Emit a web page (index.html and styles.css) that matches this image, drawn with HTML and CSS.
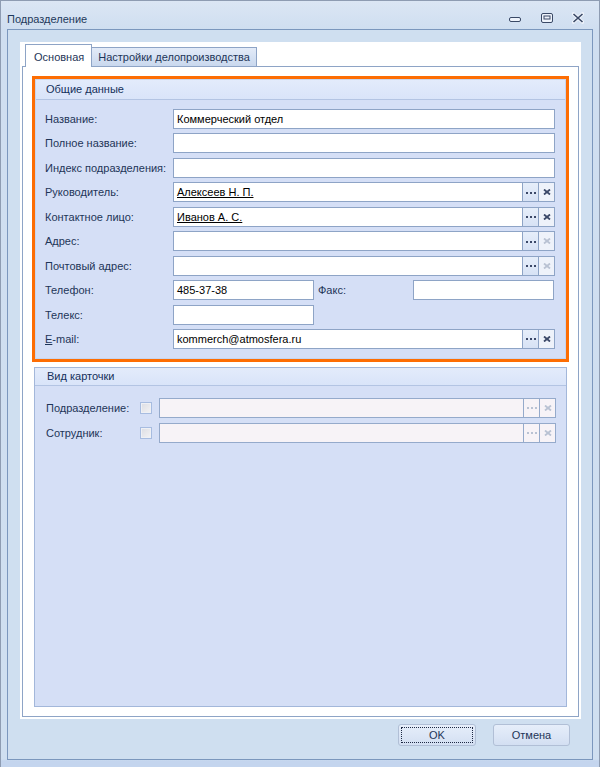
FILE: index.html
```html
<!DOCTYPE html>
<html lang="ru">
<head>
<meta charset="utf-8">
<title>Подразделение</title>
<link rel="stylesheet" href="styles.css">
</head>
<body>
<div class="window">
  <div class="titlebar">
    <span class="title">Подразделение</span>
    <div class="wbtns">
      <svg class="wbtn" width="12" height="12" viewBox="0 0 12 12"><rect x="0.5" y="5.5" width="11" height="4" rx="1.5" fill="#eef3fb" stroke="#3a4966"/></svg>
      <svg class="wbtn" width="12" height="12" viewBox="0 0 12 12"><rect x="0.5" y="1.5" width="11" height="9" rx="1.5" fill="#eef3fb" stroke="#3a4966"/><rect x="3" y="4" width="6" height="3" fill="none" stroke="#3a4966"/></svg>
      <svg class="wbtn" width="12" height="12" viewBox="0 0 12 12"><path d="M1.5 2 L10.5 10 M10.5 2 L1.5 10" stroke="#eef3fb" stroke-width="3.6" stroke-linecap="round"/><path d="M1.5 2 L10.5 10 M10.5 2 L1.5 10" stroke="#3a4966" stroke-width="1.6"/></svg>
    </div>
  </div>
  <div class="frame">
    <div class="panel">
      <div class="tabs">
        <div class="tab active">Основная</div>
        <div class="tab">Настройки делопроизводства</div>
      </div>
      <div class="pane">
        <div class="focusbox">
          <div class="group g1">
            <div class="ghead">Общие данные</div>
            <div class="gbody form">
              <label>Название:</label>
              <div class="field"><span class="val">Коммерческий отдел</span></div>
              <label>Полное название:</label>
              <div class="field"></div>
              <label>Индекс подразделения:</label>
              <div class="field"></div>
              <label>Руководитель:</label>
              <div class="field lookup"><span class="val link">Алексеев Н. П.</span><span class="fb dots"><svg width="10" height="3" viewBox="0 0 10 3"><rect x="0" y="0" width="2" height="2"/><rect x="4" y="0" width="2" height="2"/><rect x="8" y="0" width="2" height="2"/></svg></span><span class="fb clr"><svg width="8" height="6" viewBox="0 0 8 6"><path d="M1 0.5 L7 5.5 M7 0.5 L1 5.5" stroke-width="1.8"/></svg></span></div>
              <label>Контактное лицо:</label>
              <div class="field lookup"><span class="val link">Иванов А. С.</span><span class="fb dots"><svg width="10" height="3" viewBox="0 0 10 3"><rect x="0" y="0" width="2" height="2"/><rect x="4" y="0" width="2" height="2"/><rect x="8" y="0" width="2" height="2"/></svg></span><span class="fb clr"><svg width="8" height="6" viewBox="0 0 8 6"><path d="M1 0.5 L7 5.5 M7 0.5 L1 5.5" stroke-width="1.8"/></svg></span></div>
              <label>Адрес:</label>
              <div class="field lookup"><span class="val"></span><span class="fb dots"><svg width="10" height="3" viewBox="0 0 10 3"><rect x="0" y="0" width="2" height="2"/><rect x="4" y="0" width="2" height="2"/><rect x="8" y="0" width="2" height="2"/></svg></span><span class="fb clr off"><svg width="8" height="6" viewBox="0 0 8 6"><path d="M1 0.5 L7 5.5 M7 0.5 L1 5.5" stroke-width="1.8"/></svg></span></div>
              <label>Почтовый адрес:</label>
              <div class="field lookup"><span class="val"></span><span class="fb dots"><svg width="10" height="3" viewBox="0 0 10 3"><rect x="0" y="0" width="2" height="2"/><rect x="4" y="0" width="2" height="2"/><rect x="8" y="0" width="2" height="2"/></svg></span><span class="fb clr off"><svg width="8" height="6" viewBox="0 0 8 6"><path d="M1 0.5 L7 5.5 M7 0.5 L1 5.5" stroke-width="1.8"/></svg></span></div>
              <label>Телефон:</label>
              <div class="split">
                <div class="field short"><span class="val">485-37-38</span></div>
                <label class="fax">Факс:</label>
                <div class="field short"></div>
              </div>
              <label>Телекс:</label>
              <div class="split">
                <div class="field short"></div>
              </div>
              <label><u>E</u>-mail:</label>
              <div class="field lookup"><span class="val">kommerch@atmosfera.ru</span><span class="fb dots"><svg width="10" height="3" viewBox="0 0 10 3"><rect x="0" y="0" width="2" height="2"/><rect x="4" y="0" width="2" height="2"/><rect x="8" y="0" width="2" height="2"/></svg></span><span class="fb clr"><svg width="8" height="6" viewBox="0 0 8 6"><path d="M1 0.5 L7 5.5 M7 0.5 L1 5.5" stroke-width="1.8"/></svg></span></div>
            </div>
          </div>
        </div>
        <div class="group g2">
          <div class="ghead">Вид карточки</div>
          <div class="gbody form2">
            <label>Подразделение:</label>
            <span class="chk"></span>
            <div class="field lookup disabled"><span class="val"></span><span class="fb dots off"><svg width="10" height="3" viewBox="0 0 10 3"><rect x="0" y="0" width="2" height="2"/><rect x="4" y="0" width="2" height="2"/><rect x="8" y="0" width="2" height="2"/></svg></span><span class="fb clr off"><svg width="8" height="6" viewBox="0 0 8 6"><path d="M1 0.5 L7 5.5 M7 0.5 L1 5.5" stroke-width="1.8"/></svg></span></div>
            <label>Сотрудник:</label>
            <span class="chk"></span>
            <div class="field lookup disabled"><span class="val"></span><span class="fb dots off"><svg width="10" height="3" viewBox="0 0 10 3"><rect x="0" y="0" width="2" height="2"/><rect x="4" y="0" width="2" height="2"/><rect x="8" y="0" width="2" height="2"/></svg></span><span class="fb clr off"><svg width="8" height="6" viewBox="0 0 8 6"><path d="M1 0.5 L7 5.5 M7 0.5 L1 5.5" stroke-width="1.8"/></svg></span></div>
          </div>
        </div>
      </div>
    </div>
    <div class="actions">
      <button class="btn ok focused"><span>OK</span></button>
      <button class="btn"><span>Отмена</span></button>
    </div>
  </div>
</div>
</body>
</html>
```
FILE: styles.css
```css
* { box-sizing: border-box; }
html, body { margin: 0; padding: 0; }
body {
  width: 600px;
  height: 767px;
  overflow: hidden;
  font-family: "Liberation Sans", Arial, sans-serif;
  font-size: 11px;
  color: #1e3558;
  background: #c8d8ee;
}
.window {
  width: 600px;
  height: 767px;
  border: 1px solid #8e9cb2;
  border-bottom: none;
  background: linear-gradient(#dbe6f4, #cfdef0 29px, #cfdff0 758px, #c4d5ee 760px);
  display: flex;
  flex-direction: column;
}
.titlebar {
  height: 28px;
  display: flex;
  align-items: center;
  padding-left: 6px;
  padding-right: 14px;
  flex: none;
}
.title { color: #1e395b; font-size: 11px; margin-top: 8px; }
.wbtns { margin-left: auto; display: flex; gap: 19px; margin-top: 6px; margin-right: 1px; }
.wbtns .wbtn:first-child { margin-right: 1px; }
.wbtn { display: block; }
.frame {
  margin: 0 6px;
  border: 1px solid #7b97bd;
  height: 731px;
  display: flex;
  flex-direction: column;
  padding: 12px 11px 0 12px;
  background: #cfdff0;
  flex: none;
}
.panel {
  background: #fff;
  height: 677px;
  padding: 2px 2px 2px 2px;
  display: flex;
  flex-direction: column;
  flex: none;
}
.tabs {
  display: flex;
  align-items: flex-end;
  padding-left: 3px;
  height: 22px;
  flex: none;
  position: relative;
  z-index: 1;
}
.tab {
  height: 19px;
  padding: 0 6px 0 6px;
  line-height: 18px;
  border: 1px solid #8ea4c6;
  border-bottom: none;
  background: linear-gradient(#e3ebf8, #c9d8ee);
  color: #1e3558;
  margin-left: -1px;
}
.tab.active {
  height: 23px;
  margin-bottom: -1px;
  background: #fff;
  padding: 3px 7px 0 8px;
  margin-left: 0;
  border-right: 1px solid #8ea4c6;
  color: #1e3558;
}
.pane {
  flex: 1;
  border: 1px solid #8ea4c6;
  padding: 9px;
  background: #fff;
  display: flex;
  flex-direction: column;
  gap: 5px;
}
.focusbox {
  border: 3px solid #fd6d03;
  flex: none;
}
.group {
  background: #d5dff6;
  border: 1px solid #a3b7da;
}
.g1 { border-color: #c7d5ee; }
.g2 { flex: 1; margin: 0 2px; }
.ghead {
  height: 20px;
  line-height: 19px;
  padding-left: 10px;
  background: linear-gradient(#e3ebfb, #d9e4f9);
  border-bottom: 1px solid #b3c4e3;
  color: #15305a;
}
.g2 .ghead { height: 18px; line-height: 17px; padding-left: 12px; }
.gbody { padding: 9px 10px 9px 9px; }
.form {
  display: grid;
  grid-template-columns: 128px 1fr;
  row-gap: 4.45px;
  align-items: center;
}
.form2 {
  display: grid;
  grid-template-columns: 94px 19px 1fr;
  row-gap: 5px;
  align-items: center;
  padding-top: 12px;
  padding-left: 11px;
  padding-right: 10px;
}
label { white-space: nowrap; }
.field {
  height: 20px;
  border: 1px solid #8ea4c6;
  background: #fff;
  display: flex;
  align-items: center;
  color: #000;
}
.val { flex: 1; padding-left: 3px; white-space: nowrap; }
.link { text-decoration: underline; }
.fb {
  width: 16px;
  height: 18px;
  border-left: 1px solid #8ea4c6;
  background: linear-gradient(#e6eefa, #d7e2f5);
  display: flex;
  align-items: center;
  justify-content: center;
  flex: none;
}
.fb.dots svg { fill: #3b4868; margin-top: 2px; }
.fb.clr svg { stroke: #3b4868; }
.fb.clr.off svg { stroke: #b9c2d3; }
.fb.dots.off svg { fill: #b9c2d3; }
.fb.clr { background: #eef2fa; }
.split { display: flex; align-items: center; }
.field.short { width: 141px; }
.fax { width: 99px; padding-left: 4px; }
.disabled { background: #f7f3f7; border-color: #95aacb; }
.disabled .fb { background: #f7f3f7; border-color: #95aacb; }
.chk {
  width: 12px;
  height: 12px;
  border: 1px solid #a7bce0;
  background: linear-gradient(135deg, #dcdde3, #f3f3f5);
  box-shadow: inset 0 0 0 1px #eef0f5;
  display: block;
}
.actions {
  display: flex;
  justify-content: flex-end;
  gap: 17px;
  padding: 5px 11px 0 0;
}
.btn {
  width: 77px;
  height: 22px;
  border: 1px solid #b1bfd6;
  border-radius: 3px;
  background: linear-gradient(#e6eefa, #d3dff2);
  font-family: "Liberation Sans", Arial, sans-serif;
  font-size: 11px;
  color: #1e3558;
  padding: 2px;
  display: flex;
}
.btn.ok { width: 78px; }
.btn span {
  flex: 1;
  display: flex;
  align-items: center;
  justify-content: center;
  border: 1px dotted transparent;
}
.btn.focused span { border-color: #1e2a44; }
```
